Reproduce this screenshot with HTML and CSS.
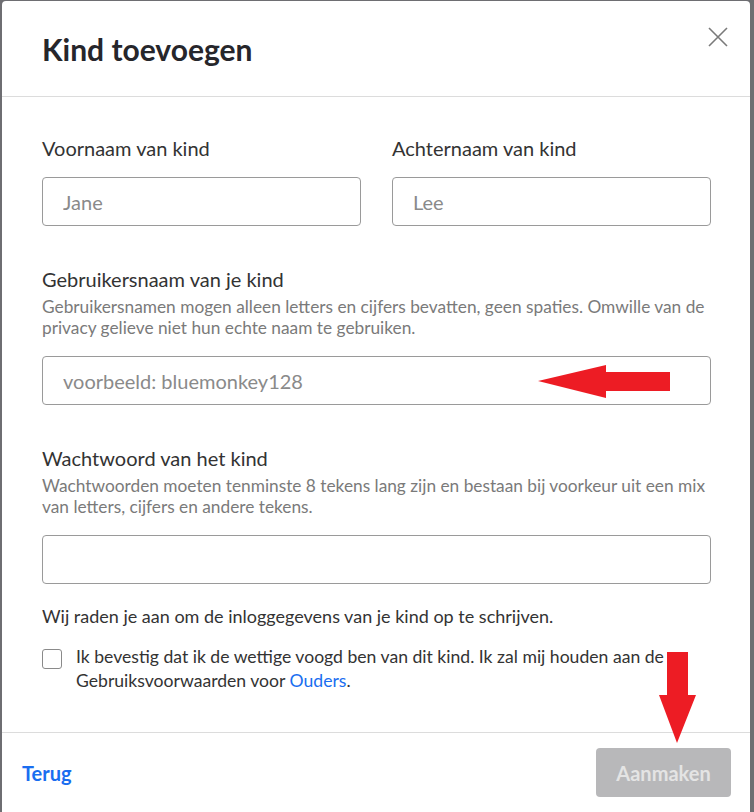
FILE: index.html
```html
<!DOCTYPE html>
<html lang="nl">
<head>
<meta charset="utf-8">
<title>Kind toevoegen</title>
<link rel="stylesheet" href="styles.css">
</head>
<body>
<div class="modal">
  <header class="modal-header">
    <h1 class="modal-title">Kind toevoegen</h1>
    <button class="close" aria-label="Sluiten">
      <svg width="20" height="20" viewBox="0 0 20 20"><path d="M1 1 L19 19 M19 1 L1 19" stroke="#7a7a7a" stroke-width="1.6" fill="none"/></svg>
    </button>
  </header>
  <main class="modal-body">
    <div class="row">
      <div class="field">
        <label class="label">Voornaam van kind</label>
        <input class="input" type="text" placeholder="Jane">
      </div>
      <div class="field">
        <label class="label">Achternaam van kind</label>
        <input class="input" type="text" placeholder="Lee">
      </div>
    </div>
    <div class="field block">
      <label class="label">Gebruikersnaam van je kind</label>
      <p class="help">Gebruikersnamen mogen alleen letters en cijfers bevatten, geen spaties. Omwille van de privacy gelieve niet hun echte naam te gebruiken.</p>
      <div class="input-wrap">
        <input class="input" type="text" placeholder="voorbeeld: bluemonkey128">
        <svg class="arrow-left" width="134" height="34" viewBox="0 0 134 34"><polygon points="0,16 68,0 68,7 132,7 132,26 68,26 68,33" fill="#ed1c24"/></svg>
      </div>
    </div>
    <div class="field block">
      <label class="label">Wachtwoord van het kind</label>
      <p class="help">Wachtwoorden moeten tenminste 8 tekens lang zijn en bestaan bij voorkeur uit een mix van letters, cijfers en andere tekens.</p>
      <input class="input" type="password">
    </div>
    <p class="note">Wij raden je aan om de inloggegevens van je kind op te schrijven.</p>
    <div class="check">
      <span class="box"></span>
      <p class="check-text">Ik bevestig dat ik de wettige voogd ben van dit kind. Ik zal mij houden aan de Gebruiksvoorwaarden voor <a href="#" class="link">Ouders</a>.</p>
    </div>
  </main>
  <footer class="modal-footer">
    <a href="#" class="back">Terug</a>
    <div class="btn-wrap">
      <svg class="arrow-down" width="40" height="92" viewBox="0 0 40 92"><polygon points="9,0 30,0 30,43 38,43 19,91 1,43 9,43" fill="#ed1c24"/></svg>
      <button class="btn" disabled>Aanmaken</button>
    </div>
  </footer>
</div>
</body>
</html>
```

FILE: styles.css
```css
* { box-sizing: border-box; }
html, body { margin: 0; padding: 0; }
body {
  background: #6e6e72;
  font-family: Lato, "Open Sans", sans-serif;
  height: 812px;
  overflow: hidden;
}
.modal {
  margin: 1px 0 0 2px;
  width: 748px;
  height: 820px;
  background: #fff;
  border-radius: 4px 4px 0 0;
}
.modal-header {
  height: 96px;
  border-bottom: 1px solid #dcdcdc;
  display: flex;
  justify-content: space-between;
  align-items: flex-start;
  padding: 0 22px 0 40px;
}
.modal-title {
  margin: 30px 0 0;
  font-size: 30px;
  line-height: 36px;
  font-weight: 700;
  color: #26262b;
}
.close {
  background: none;
  border: 0;
  padding: 0;
  margin-top: 26px;
  width: 20px;
  height: 20px;
}
.modal-body {
  padding: 39px 39px 0 40px;
  height: 635px;
}
.row {
  display: flex;
  gap: 31px;
}
.field {
  display: flex;
  flex-direction: column;
  flex: 1;
}
.block { margin-top: 41px; }
.label {
  font-size: 20px;
  line-height: 24px;
  color: #333;
}
.help {
  margin: 5px 0 18px;
  font-size: 17.3px;
  line-height: 21px;
  color: #7a7a7a;
}
.row .label { margin-bottom: 17px; }
.input {
  width: 100%;
  height: 49px;
  border: 1px solid #9a9a9a;
  border-radius: 4px;
  padding: 0 20px;
  font-family: Lato, sans-serif;
  font-size: 20px;
  color: #333;
  background: #fff;
}
.input::placeholder { color: #8a8a8a; }
.input-wrap { position: relative; }
.arrow-left {
  position: absolute;
  left: 496px;
  top: 9px;
}
.note {
  margin: 22px 0 0;
  font-size: 18px;
  line-height: 21px;
  color: #333;
}
.check {
  display: flex;
  gap: 14px;
  margin-top: 18px;
}
.box {
  flex: none;
  width: 20px;
  height: 20px;
  margin-top: 4px;
  border: 1px solid #8a8a8a;
  border-radius: 3px;
}
.check-text {
  margin: 0;
  font-size: 17.6px;
  line-height: 24px;
  color: #333;
}
.link { color: #1a6ef0; text-decoration: none; }
.modal-footer {
  border-top: 1px solid #dcdcdc;
  display: flex;
  justify-content: space-between;
  align-items: center;
  padding: 15px 19px 0 20px;
}
.back {
  color: #1a6ef0;
  font-weight: 700;
  font-size: 20px;
  text-decoration: none;
}
.btn-wrap { position: relative; }
.btn {
  width: 135px;
  height: 49px;
  border: 0;
  border-radius: 4px;
  background: #b8b8ba;
  color: #e4e4e4;
  font-family: Lato, sans-serif;
  font-weight: 700;
  font-size: 20px;
}
.arrow-down {
  position: absolute;
  left: 62px;
  top: -96px;
}
```
